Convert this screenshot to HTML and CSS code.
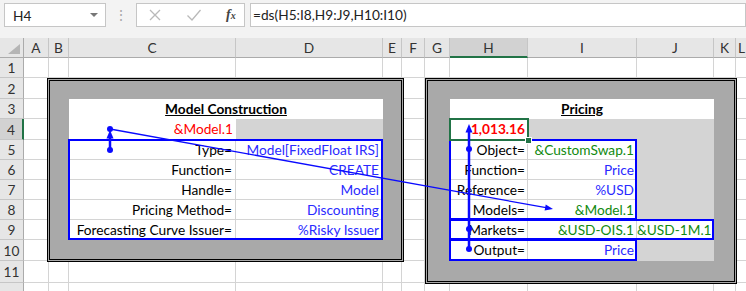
FILE: index.html
```html
<!DOCTYPE html>
<html lang="en">
<head>
    <meta charset="UTF-8">
    <meta name="viewport" content="width=device-width, initial-scale=1.0">
    <link rel="stylesheet" href="styles.css">
    <title>Pricing sheet</title>
</head>
<body>
    <div class="app">
        <div class="formula-bar">
            <div class="name-box">
                <span>H4</span>
                <span class="caret"></span>
            </div>
            <div class="grip">⋮</div>
            <div class="fx-buttons">
                <svg class="btn-icon" width="14" height="14" viewBox="0 0 14 14"><path d="M2 2 L12 12 M12 2 L2 12" stroke="#b9b9b9" stroke-width="1.3" fill="none"/></svg>
                <svg class="btn-icon" width="16" height="14" viewBox="0 0 16 14"><path d="M1.5 7.5 L6 12 L14.5 2" stroke="#b9b9b9" stroke-width="1.3" fill="none"/></svg>
                <span class="fx">f<small>x</small></span>
            </div>
            <div class="formula">=ds(H5:I8,H9:J9,H10:I10)</div>
        </div>

        <div class="sheet" id="sheet">
            <!-- column headers -->
            <div class="corner"><span class="corner-mark"></span></div>
            <div class="col-head">A</div>
            <div class="col-head">B</div>
            <div class="col-head">C</div>
            <div class="col-head">D</div>
            <div class="col-head">E</div>
            <div class="col-head">F</div>
            <div class="col-head">G</div>
            <div class="col-head active">H</div>
            <div class="col-head">I</div>
            <div class="col-head">J</div>
            <div class="col-head">K</div>
            <div class="col-head">L</div>

            <!-- Model Construction block (B2:E10) -->
            <div class="frame frame-model"></div>
            <div class="title model-title"><span>Model Construction</span></div>
            <div class="txt red model-handle">&amp;Model.1</div>
            <div class="fill-grey model-handle-pad"></div>
            <div class="cell txt m-c r5">Type=</div>
            <div class="cell txt m-d r5 blue">Model[FixedFloat IRS]</div>
            <div class="cell txt m-c r6">Function=</div>
            <div class="cell txt m-d r6 blue">CREATE</div>
            <div class="cell txt m-c r7">Handle=</div>
            <div class="cell txt m-d r7 blue">Model</div>
            <div class="cell txt m-c r8">Pricing Method=</div>
            <div class="cell txt m-d r8 blue">Discounting</div>
            <div class="cell txt m-c r9">Forecasting Curve Issuer=</div>
            <div class="cell txt m-d r9 blue">%Risky Issuer</div>
            <div class="blue-box model-args"></div>

            <!-- Pricing block (G2:K11) -->
            <div class="frame frame-pricing"></div>
            <div class="title pricing-title"><span>Pricing</span></div>
            <div class="txt red bold price-result">1,013.16</div>
            <div class="fill-grey price-pad"></div>
            <div class="cell txt p-h r5">Object=</div>
            <div class="cell txt p-i r5 green">&amp;CustomSwap.1</div>
            <div class="cell txt p-h r6">Function=</div>
            <div class="cell txt p-i r6 blue">Price</div>
            <div class="cell txt p-h r7">Reference=</div>
            <div class="cell txt p-i r7 blue">%USD</div>
            <div class="cell txt p-h r8">Models=</div>
            <div class="cell txt p-i r8 green">&amp;Model.1</div>
            <div class="cell txt p-h r9">Markets=</div>
            <div class="cell txt p-i r9 green">&amp;USD-OIS.1</div>
            <div class="cell txt p-j r9 green">&amp;USD-1M.1</div>
            <div class="cell txt p-h r10">Output=</div>
            <div class="cell txt p-i r10 blue">Price</div>
            <div class="fill-grey price-side-top"></div>
            <div class="fill-grey price-side-bottom"></div>
            <div class="blue-box price-args"></div>
            <div class="blue-box price-markets"></div>
            <div class="blue-box price-output"></div>

            <div class="selection"><span class="handle"></span></div>
        </div>

        <!-- trace precedents arrows -->
        <svg class="arrows" width="746" height="291" viewBox="0 0 746 291">
            <g fill="#0a0aff" stroke="#0a0aff">
                <line x1="110" y1="150" x2="110" y2="136" stroke-width="2.5"/>
                <polygon points="110,130 106.5,138.5 113.5,138.5" stroke="none"/>
                <circle cx="110" cy="129" r="3" stroke="none"/>
                <circle cx="110" cy="150" r="3" stroke="none"/>
                <line x1="110" y1="129" x2="546" y2="207.7" stroke-width="1.3"/>
                <polygon points="553,209 544.6,210.5 545.7,204.6" stroke="none"/>
                <line x1="469" y1="249" x2="469" y2="130" stroke-width="2.5"/>
                <polygon points="469,124 465.5,132.5 472.5,132.5" stroke="none"/>
                <circle cx="469" cy="149" r="3" stroke="none"/>
                <circle cx="469" cy="229" r="3" stroke="none"/>
                <circle cx="469" cy="249" r="3" stroke="none"/>
            </g>
        </svg>
    </div>
    <script>
        // 行見出しと空のセルを並べる (12行目は見切れるので番号なし)
        var sheet = document.getElementById('sheet');
        for (var r = 1; r <= 12; r++) {
            var head = document.createElement('div');
            head.className = r === 4 ? 'row-head active' : 'row-head';
            head.textContent = r < 12 ? r : '';
            head.style.gridRow = r + 1;
            head.style.gridColumn = 1;
            sheet.appendChild(head);
            for (var c = 2; c <= 13; c++) {
                var cell = document.createElement('div');
                cell.className = 'cell';
                cell.style.gridRow = r + 1;
                cell.style.gridColumn = c;
                sheet.appendChild(cell);
            }
        }
    </script>
</body>
</html>
```

FILE: styles.css
```css
body {
    margin: 0;
    background: #ffffff;
    font-family: "Lato", "Liberation Sans", sans-serif;
    font-size: 13.7px;
    color: #000;
    overflow: hidden;
}
.app {
    position: relative;
    width: 746px;
    height: 291px;
    overflow: hidden;
}
/* 数式バー */
.formula-bar {
    display: flex;
    align-items: flex-start;
    height: 38px;
    padding: 3px 0 0 4px;
    box-sizing: border-box;
    background: #f3f3f3;
}
.name-box {
    display: flex;
    align-items: center;
    justify-content: space-between;
    width: 102px;
    height: 24px;
    box-sizing: border-box;
    padding: 0 7px 0 8px;
    background: #fff;
    border: 1px solid #c6c6c6;
    color: #222;
}
.caret {
    width: 0;
    height: 0;
    border-left: 4px solid transparent;
    border-right: 4px solid transparent;
    border-top: 4px solid #777;
}
.grip {
    width: 30px;
    text-align: center;
    color: #a8a8a8;
    line-height: 24px;
}
.fx-buttons {
    display: flex;
    align-items: center;
    gap: 24px;
    width: 109px;
    height: 24px;
    box-sizing: border-box;
    padding-left: 11px;
    background: #fff;
    border: 1px solid #c6c6c6;
}
.fx {
    font-family: "Liberation Serif", serif;
    font-style: italic;
    font-weight: bold;
    font-size: 14px;
    color: #444;
}
.fx small {
    font-size: 10px;
}
.formula {
    flex: 1;
    height: 24px;
    margin-left: 5px;
    box-sizing: border-box;
    padding-left: 2px;
    background: #fff;
    border: 1px solid #c6c6c6;
    line-height: 22px;
    color: #222;
}
/* シート */
.sheet {
    display: grid;
    grid-template-columns: 24px 25px 20px 167px 147px 19px 23px 25px 78px 109px 77px 22px 12px;
    grid-template-rows: 20px 20px 21px 20px 21px 20px 20px 20px 20px 20px 21px 22px 20px;
}
.corner {
    position: relative;
    background: #e6e6e6;
    border-right: 1px solid #ababab;
    border-bottom: 1px solid #ababab;
}
.corner-mark {
    position: absolute;
    right: 3px;
    bottom: 3px;
    width: 0;
    height: 0;
    border-left: 12px solid transparent;
    border-bottom: 10px solid #b5b5b5;
}
.col-head {
    display: flex;
    align-items: center;
    justify-content: center;
    background: #e6e6e6;
    border-right: 1px solid #c6c6c6;
    border-bottom: 1px solid #ababab;
    color: #333;
}
.col-head.active {
    background: #d2d2d2;
    border-bottom: 2px solid #217346;
}
.row-head {
    display: flex;
    align-items: center;
    justify-content: center;
    background: #e6e6e6;
    border-right: 1px solid #ababab;
    border-bottom: 1px solid #c6c6c6;
    color: #333;
}
.row-head.active {
    background: #d2d2d2;
    border-right: 2px solid #217346;
}
.cell {
    background: #fff;
    border-right: 1px solid #d4d4d4;
    border-bottom: 1px solid #d4d4d4;
}
.txt {
    z-index: 2;
    padding-right: 3px;
    line-height: 20px;
    text-align: right;
    white-space: nowrap;
    overflow: hidden;
}
.red { color: #ff0000; }
.blue { color: #2a2aff; }
.green { color: #118a11; }
.bold { font-weight: bold; }
/* 枠 */
.frame {
    z-index: 1;
    background: #a9a9a9;
    border: 3px double #000;
}
.frame-model {
    grid-column: 3 / 7;
    grid-row: 3 / 12;
    margin: 0 -2px -1px -2px;
}
.frame-pricing {
    grid-column: 8 / 13;
    grid-row: 3 / 13;
    margin: 0 -1px -1px 0;
}
.title {
    z-index: 2;
    background: #fff;
    text-align: center;
    font-weight: bold;
    line-height: 20px;
}
.title span {
    text-decoration: underline;
}
.model-title {
    grid-column: 4 / 6;
    grid-row: 4;
}
.pricing-title {
    grid-column: 9 / 12;
    grid-row: 4;
}
.fill-grey {
    z-index: 2;
    background: #d4d4d4;
}
.model-handle {
    grid-column: 4;
    grid-row: 5;
    background: #fff;
}
.model-handle-pad {
    grid-column: 5;
    grid-row: 5;
}
.m-c { grid-column: 4; }
.m-d { grid-column: 5; }
.p-h { grid-column: 9; padding-right: 2px; }
.p-i { grid-column: 10; padding-right: 2px; }
.p-j { grid-column: 11; padding-right: 2px; }
.r5 { grid-row: 6; }
.r6 { grid-row: 7; }
.r7 { grid-row: 8; }
.r8 { grid-row: 9; }
.r9 { grid-row: 10; }
.r10 { grid-row: 11; }
.price-result {
    grid-column: 9;
    grid-row: 5;
    background: #fff;
}
.price-pad {
    grid-column: 10 / 12;
    grid-row: 5;
}
.price-side-top {
    grid-column: 11;
    grid-row: 6 / 10;
}
.price-side-bottom {
    grid-column: 11;
    grid-row: 11;
}
/* 青い罫線 */
.blue-box {
    z-index: 3;
    border: 2px solid #0000ff;
    margin: -1px 0 0 -1px;
}
.model-args {
    grid-column: 4 / 6;
    grid-row: 6 / 11;
}
.price-args {
    grid-column: 9 / 11;
    grid-row: 6 / 10;
}
.price-markets {
    grid-column: 9 / 12;
    grid-row: 10;
}
.price-output {
    grid-column: 9 / 11;
    grid-row: 11;
}
/* 選択セル */
.selection {
    position: relative;
    z-index: 4;
    grid-column: 9;
    grid-row: 5;
    margin: -1px -1px -1px -1px;
    border: 2px solid #217346;
}
.handle {
    position: absolute;
    right: -5px;
    bottom: -5px;
    width: 5px;
    height: 5px;
    background: #217346;
    border: 1px solid #fff;
}
.arrows {
    position: absolute;
    left: 0;
    top: 0;
    z-index: 10;
    pointer-events: none;
}
```
